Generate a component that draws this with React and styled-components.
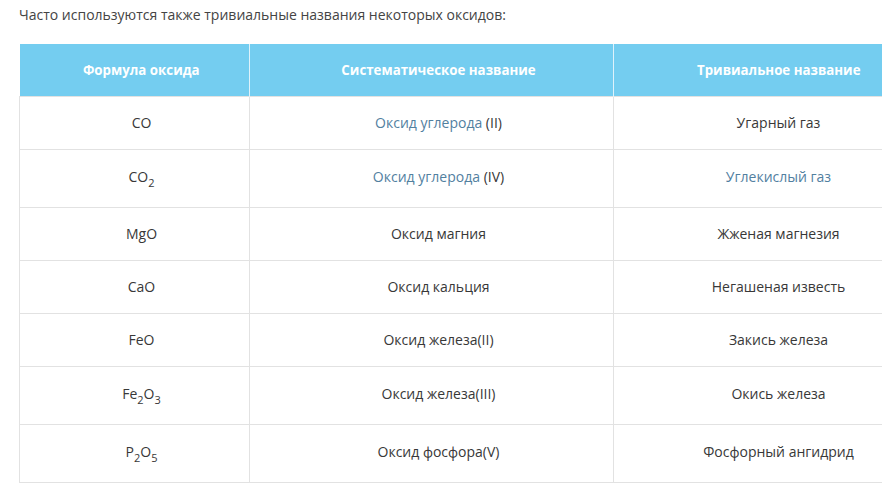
import React from 'react'
import styled, { createGlobalStyle } from 'styled-components'

const GlobalStyle = createGlobalStyle`
body {
  margin: 0;
  overflow: hidden;
  background: #fff;
  font-family: "Open Sans", "Noto Sans", sans-serif;
}
`

const Page = styled.div`
padding: 5px 0 0 19px;
width: 940px;
`

const Intro = styled.p`
margin: 0 0 19px;
font-size: 14px;
line-height: 20px;
color: #444;
`

const Table = styled.table`
border-collapse: collapse;
table-layout: fixed;
width: 910px;
font-size: 14px;
color: #383838;
`

const Th = styled.th`
box-sizing: border-box;
width: ${({ $w }) => $w}px;
height: 52px;
padding: 0 6px 0 20px;
background: #74cdf0;
color: #fff;
font-size: 13.3px;
font-weight: 700;
text-align: center;
border-right: 1px solid #dff2fb;
&:last-child { border-right: none; }
`

const Td = styled.td`
padding: ${({ $tall }) => ($tall ? '17px 6px 20px 20px' : '16px 6px 16px 20px')};
line-height: 20px;
text-align: center;
border: 1px solid #e2e2e2;
`

const Link = styled.a`
color: #52809f;
text-decoration: none;
`

const Sub = styled.sub`
font-size: 11px;
line-height: 0;
vertical-align: -5px;
`

const rows = [
  [<>CO</>, <><Link>Оксид углерода</Link> (II)</>, <>Угарный газ</>],
  [<>CO<Sub>2</Sub></>, <><Link>Оксид углерода</Link> (IV)</>, <Link>Углекислый газ</Link>, true],
  [<>MgO</>, <>Оксид магния</>, <>Жженая магнезия</>],
  [<>CaO</>, <>Оксид кальция</>, <>Негашеная известь</>],
  [<>FeO</>, <>Оксид железа(II)</>, <>Закись железа</>],
  [<>Fe<Sub>2</Sub>O<Sub>3</Sub></>, <>Оксид железа(III)</>, <>Окись железа</>, true],
  [<>P<Sub>2</Sub>O<Sub>5</Sub></>, <>Оксид фосфора(V)</>, <>Фосфорный ангидрид</>, true],
]

const App = () => {
  return (
    <Page>
      <GlobalStyle />
      <Intro>Часто используются также тривиальные названия некоторых оксидов:</Intro>
      <Table>
        <thead>
          <tr>
            <Th $w={230}>Формула оксида</Th>
            <Th $w={364}>Систематическое название</Th>
            <Th $w={316}>Тривиальное название</Th>
          </tr>
        </thead>
        <tbody>
          {rows.map(([a, b, c, tall], i) => (
            <tr key={i}>
              <Td $tall={tall}>{a}</Td>
              <Td $tall={tall}>{b}</Td>
              <Td $tall={tall}>{c}</Td>
            </tr>
          ))}
        </tbody>
      </Table>
    </Page>
  )
}

export default App
